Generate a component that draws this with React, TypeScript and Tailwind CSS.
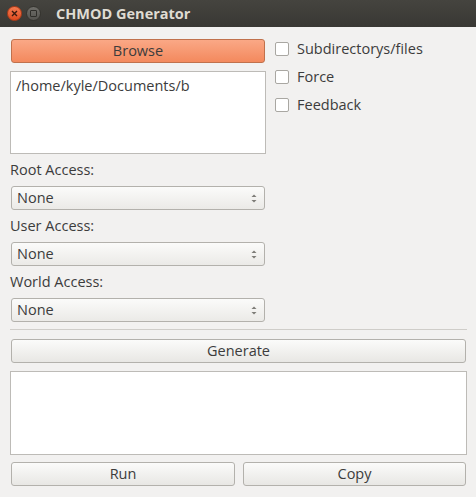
import React from "react";

function Btn({ label, className = "" }: { label: string; className?: string }) {
  return (
    <div
      className={`h-[24px] flex items-center justify-center rounded-[3px] border border-[#b3b1ac] bg-gradient-to-b from-[#fbfbfa] to-[#e8e7e4] text-[#3c3c3c] text-[14.5px] ${className}`}
    >
      {label}
    </div>
  );
}

function Combo() {
  return (
    <div className="mx-[1px] h-[24px] flex items-center justify-between rounded-[3px] border border-[#b3b1ac] bg-gradient-to-b from-[#fbfbfa] to-[#ebeae7] pl-[5px] pr-[7px] text-[14.5px] text-[#3c3c3c]">
      <span>None</span>
      <svg width="6" height="12" viewBox="0 0 6 12">
        <polygon points="3,2.5 5.5,5 0.5,5" fill="#7d7b77" />
        <polygon points="0.5,8 5.5,8 3,10.5" fill="#7d7b77" />
      </svg>
    </div>
  );
}

function Check({ label }: { label: string }) {
  return (
    <div className="h-[28px] flex items-center">
      <div className="w-[14px] h-[14px] rounded-[2px] border border-[#a9a7a2] bg-white" />
      <span className="ml-[8px] text-[14.5px] text-[#3c3c3c]">{label}</span>
    </div>
  );
}

export default function App() {
  return (
    <div
      className="w-[476px] h-[497px] bg-[#f2f1f0] overflow-hidden"
      style={{ fontFamily: '"Open Sans", "Noto Sans", sans-serif' }}
    >
      <div className="h-[27px] bg-gradient-to-b from-[#45443f] to-[#393834] flex items-center">
        <div className="ml-[7px] w-[15px] h-[15px] rounded-full bg-gradient-to-b from-[#f47a4f] to-[#df4a1e] border border-[#b23c18] flex items-center justify-center">
          <svg width="7" height="7" viewBox="0 0 7 7">
            <path d="M1 1 L6 6 M6 1 L1 6" stroke="#3b1a0e" strokeWidth="1.4" />
          </svg>
        </div>
        <div className="ml-[4px] w-[15px] h-[15px] rounded-full bg-gradient-to-b from-[#6f6e69] to-[#555450] border border-[#35342f] flex items-center justify-center">
          <div className="w-[7px] h-[7px] border border-[#2f2e2a] rounded-[1px]" />
        </div>
        <span className="ml-[15px] text-[14.5px] font-bold text-[#dfdbd2]">CHMOD Generator</span>
      </div>

      <div className="pl-[10px] pr-[9px]">
        <div className="flex">
          <div className="w-[256px]">
            <div className="mt-[12px] mx-[1px] h-[24px] flex items-center justify-center rounded-[3px] border border-[#c0714c] bg-gradient-to-b from-[#faa886] to-[#f3895d] text-[14.5px] text-[#3c3c3c]">
              Browse
            </div>
            <div className="mt-[8px] h-[83px] border border-[#bdbbb7] bg-white px-[5px] pt-[3px] text-[14.5px] text-[#3c3c3c]">
              /home/kyle/Documents/b
            </div>
          </div>
          <div className="ml-[9px] pt-[8px]">
            <Check label="Subdirectorys/files" />
            <Check label="Force" />
            <Check label="Feedback" />
          </div>
        </div>

        <div className="w-[256px]">
          <div className="h-[32px] flex items-center pb-[1px] text-[14.5px] text-[#3c3c3c]">Root Access:</div>
          <Combo />
          <div className="h-[32px] flex items-center pb-[1px] text-[14.5px] text-[#3c3c3c]">User Access:</div>
          <Combo />
          <div className="h-[32px] flex items-center pb-[1px] text-[14.5px] text-[#3c3c3c]">World Access:</div>
          <Combo />
        </div>

        <div className="mt-[7px] h-px bg-[#cfcdc9]" />
        <Btn label="Generate" className="mt-[9px] mx-[1px]" />
        <div className="mt-[8px] h-[84px] border border-[#bdbbb7] bg-white" />
        <div className="mt-[7px] flex mx-[1px] gap-[8px]">
          <Btn label="Run" className="w-[224px]" />
          <Btn label="Copy" className="flex-1" />
        </div>
      </div>
    </div>
  );
}
